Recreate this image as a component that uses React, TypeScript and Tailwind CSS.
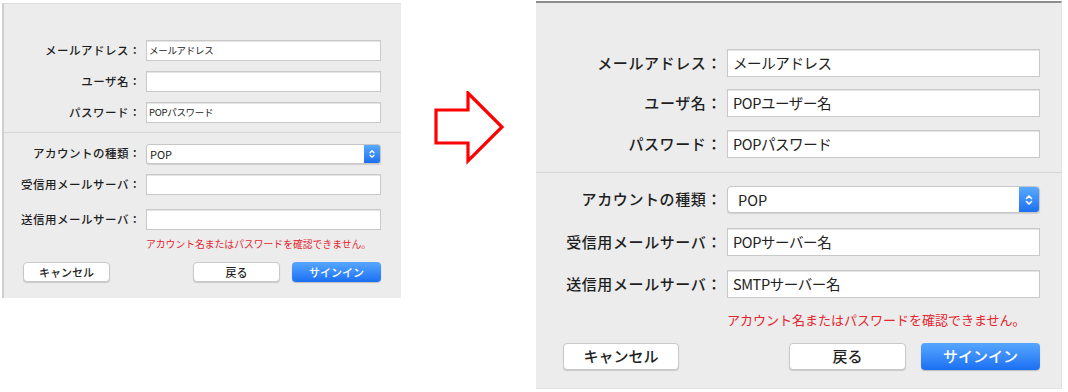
import React from 'react';

const FONT = { fontFamily: '"Noto Sans CJK JP", "Noto Sans", sans-serif' };

type Size = {
  panel: string;
  label: string;
  field: string;
  fieldText: string;
  select: string;
  selectText: string;
  stepper: string;
  chevron: number;
  divider: string;
  error: string;
  buttons: string;
  button: string;
  cancel: string;
  back: string;
  signin: string;
  rowGaps: string[];
};

const small: Size = {
  panel: 'ml-[2px] mt-[3px] w-[399px] h-[295px] pt-[36px] border-l-2 border-t border-l-[#cfcfcf] border-t-[#dcdcdc]',
  label: 'w-[137px] text-right text-[11.5px] font-medium text-[#1e1e1e] tracking-[0.5px]',
  field: 'ml-[5px] w-[235px] h-[21px] pl-[2px]',
  fieldText: 'text-[9.5px] tracking-[-0.3px]',
  select: 'ml-[5px] w-[235px] h-[20px] rounded-[3px]',
  selectText: 'pl-[3px] text-[11px]',
  stepper: 'w-[16px]',
  chevron: 8,
  divider: 'mt-[9px]',
  error: 'ml-[142px] mt-[7px] h-[14px] text-[9.8px]',
  buttons: 'mt-[11px] pl-[19px]',
  button: 'h-[20px] text-[11px] font-medium',
  cancel: 'w-[87px]',
  back: 'ml-[83px] w-[87px]',
  signin: 'ml-[12px] w-[89px]',
  rowGaps: ['mt-0', 'mt-[10px]', 'mt-[10px]', 'mt-[11px]', 'mt-[10px]', 'mt-[14px]'],
};

const large: Size = {
  panel: 'mt-[1px] w-[526px] h-[388px] pt-[46px] border-t-2 border-r border-b border-t-[#8c8c8c] border-r-[#e2e2e2] border-b-[#e4e4e4]',
  label: 'w-[186px] text-right text-[15px] font-medium text-[#1e1e1e] tracking-[0.6px]',
  field: 'ml-[5px] w-[313px] h-[28px] pl-[5px]',
  fieldText: 'text-[14.5px] tracking-[-0.4px]',
  select: 'ml-[5px] w-[313px] h-[27px] rounded-[4px]',
  selectText: 'pl-[10px] text-[14.5px]',
  stepper: 'w-[20px]',
  chevron: 10,
  divider: 'mt-[14px]',
  error: 'ml-[191px] mt-[13px] h-[18px] text-[13px]',
  buttons: 'mt-[14px] pl-[27px]',
  button: 'h-[27px] text-[15px] font-medium',
  cancel: 'w-[116px]',
  back: 'ml-[110px] w-[117px]',
  signin: 'ml-[15px] w-[119px]',
  rowGaps: ['mt-0', 'mt-[12px]', 'mt-[13px]', 'mt-[13px]', 'mt-[15px]', 'mt-[14px]'],
};

function Row({ s, gap, label, children }: { s: Size; gap: string; label: string; children: React.ReactNode }) {
  return (
    <div className={`flex items-center ${gap}`}>
      <div className={s.label}>{label}</div>
      {children}
    </div>
  );
}

function Field({ s, value }: { s: Size; value?: string }) {
  return (
    <div className={`${s.field} flex items-center bg-white border border-[#c9c9c9] shadow-[inset_0_1px_0_#e4e4e4]`}>
      <span className={`${s.fieldText} text-[#222] whitespace-nowrap`}>{value}</span>
    </div>
  );
}

function Select({ s }: { s: Size }) {
  return (
    <div className={`${s.select} flex items-stretch bg-white border border-[#c6c6c6] shadow-[0_1px_1px_rgba(0,0,0,0.12)] overflow-hidden`}>
      <div className={`flex-1 flex items-center ${s.selectText} text-[#222]`}>POP</div>
      <div className={`${s.stepper} flex items-center justify-center bg-gradient-to-b from-[#5aa9ff] to-[#1c6ff0]`}>
        <svg width={s.chevron} height={s.chevron + 2} viewBox="0 0 10 12" fill="none" stroke="white" strokeWidth="1.6" strokeLinecap="round" strokeLinejoin="round">
          <path d="M2.5 4.5 L5 2 L7.5 4.5" />
          <path d="M2.5 7.5 L5 10 L7.5 7.5" />
        </svg>
      </div>
    </div>
  );
}

function Panel({ s, values }: { s: Size; values: string[] }) {
  const white = 'bg-white border border-[#c8c8c8] shadow-[0_1px_1px_rgba(0,0,0,0.15)] text-[#222]';
  return (
    <div className={`${s.panel} shrink-0 bg-[#ececec] flex flex-col`}>
      <Row s={s} gap={s.rowGaps[0]} label="メールアドレス：">
        <Field s={s} value={values[0]} />
      </Row>
      <Row s={s} gap={s.rowGaps[1]} label="ユーザ名：">
        <Field s={s} value={values[1]} />
      </Row>
      <Row s={s} gap={s.rowGaps[2]} label="パスワード：">
        <Field s={s} value={values[2]} />
      </Row>

      <div className={`${s.divider} h-px bg-[#d6d6d6]`} />

      <Row s={s} gap={s.rowGaps[3]} label="アカウントの種類：">
        <Select s={s} />
      </Row>
      <Row s={s} gap={s.rowGaps[4]} label="受信用メールサーバ：">
        <Field s={s} value={values[3]} />
      </Row>
      <Row s={s} gap={s.rowGaps[5]} label="送信用メールサーバ：">
        <Field s={s} value={values[4]} />
      </Row>

      <div className={`${s.error} flex items-center text-[#e3262f] whitespace-nowrap`}>
        アカウント名またはパスワードを確認できません。
      </div>

      <div className={`flex ${s.buttons}`}>
        <button className={`${s.button} ${s.cancel} ${white} rounded-[4px]`}>キャンセル</button>
        <button className={`${s.button} ${s.back} ${white} rounded-[4px]`}>戻る</button>
        <button className={`${s.button} ${s.signin} rounded-[4px] text-white bg-gradient-to-b from-[#57a6ff] to-[#1a6ff2] shadow-[0_1px_1px_rgba(0,0,0,0.2)]`}>
          サインイン
        </button>
      </div>
    </div>
  );
}

export default function App() {
  return (
    <div className="w-[1068px] h-[392px] bg-white flex items-start overflow-hidden" style={FONT}>
      <Panel s={small} values={['メールアドレス', '', 'POPパスワード', '', '']} />

      {/* Arrow */}
      <div className="w-[135px] shrink-0 pt-[91px] pl-[33px]">
        <svg width="72" height="74" viewBox="0 0 72 74" fill="none">
          <path
            d="M2 19 L34 19 L34 2 L68 36 L34 70 L34 52 L2 52 Z"
            stroke="#ff0000"
            strokeWidth="3.2"
            strokeLinejoin="miter"
            fill="white"
          />
        </svg>
      </div>

      <Panel s={large} values={['メールアドレス', 'POPユーザー名', 'POPパスワード', 'POPサーバー名', 'SMTPサーバー名']} />
    </div>
  );
}
